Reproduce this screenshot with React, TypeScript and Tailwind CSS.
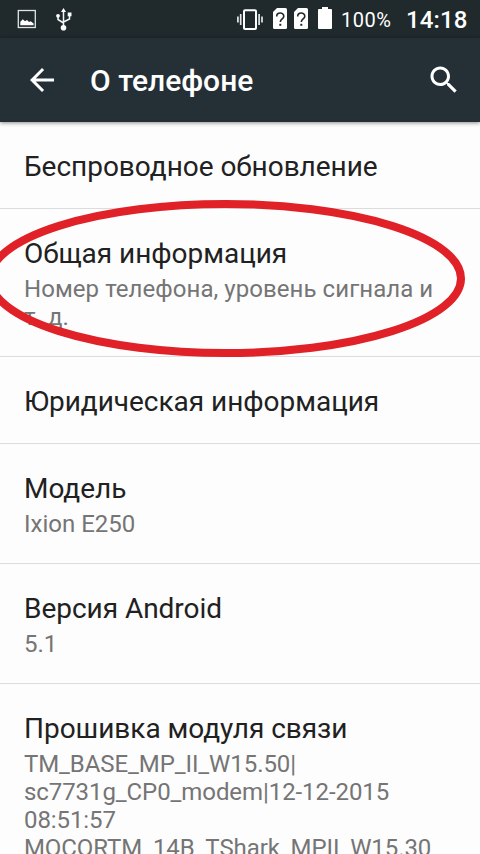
import React from 'react';

const items = [
    { title: 'Беспроводное обновление', lines: [], box: 'h-[87px]', tracking: '' },
    { title: 'Общая информация', lines: ['Номер телефона, уровень сигнала и', 'т. д.'], box: 'h-[148px]', tracking: 'tracking-[0.06px]' },
    { title: 'Юридическая информация', lines: [], box: 'h-[87px]', tracking: '' },
    { title: 'Модель', lines: ['Ixion E250'], box: 'h-[120px]', tracking: '' },
    { title: 'Версия Android', lines: ['5.1'], box: 'h-[120px]', tracking: '' },
    {
        title: 'Прошивка модуля связи',
        lines: ['TM_BASE_MP_II_W15.50|', 'sc7731g_CP0_modem|12-12-2015', '08:51:57', 'MOCORTM_14B_TShark_MPII_W15.30'],
        box: 'h-[190px]',
        tracking: 'tracking-[-0.08px]',
    },
];

const SimIcon = () => (
    <svg className="h-[21px] w-[14px]" viewBox="0 0 14 21" fill="none">
        <path d="M4 0H12.5Q14 0 14 1.5V19.5Q14 21 12.5 21H1.5Q0 21 0 19.5V4Z" fill="#fff" />
        <path d="M3.7 8.4C3.7 4 10.8 4 10.8 8.2C10.8 10.8 7.3 11 7.3 14" stroke="#20292c" strokeWidth="1.6" />
        <path d="M6.3 15.8h2v2h-2z" fill="#20292c" />
    </svg>
);

const StatusBar = () => (
    <div className="flex h-[38px] shrink-0 items-start bg-[#20292c] text-white">
        {/* Screenshot saved */}
        <svg className="mt-[9px] ml-[17px] h-5 w-5" viewBox="0 0 20 20" fill="none">
            <rect x="1.3" y="1.5" width="17" height="17" stroke="#dfe5e6" strokeWidth="1.3" />
            <path d="M3.3 16.3V12.8L5.8 10.2L8 12.2L10 11L12 13L13.7 12.3L16.6 14.5V16.3Z" fill="#fff" />
        </svg>
        {/* USB */}
        <svg className="mt-2 ml-[18px] h-[23px] w-[18px]" viewBox="0 0 18 23" fill="none">
            <path d="M8.5 3V19M3 8.5V11.5L8.5 15M14.5 7.5V11L8.5 14" stroke="#f2f5f5" strokeWidth="1.5" />
            <path d="M8.5 0L11 4H6Z" fill="#fff" />
            <circle cx="8.5" cy="19.8" r="2.8" fill="#fff" />
            <circle cx="3" cy="7.8" r="1.9" fill="#fff" />
            <path d="M12.7 4.5h3.8v3.8h-3.8z" fill="#fff" />
        </svg>
        {/* Vibrate mode */}
        <svg className="mt-[9px] ml-[163px] h-[21px] w-7" viewBox="0 0 28 21" fill="none">
            <rect x="8" y="1.3" width="12" height="18.6" rx="1" stroke="#fff" strokeWidth="2" />
            <path d="M4.7 5V16M1.9 7.5V13.5M23.1 5V16M26 7.5V13.5" stroke="#e3e7e8" strokeWidth="1.7" />
        </svg>
        <div className="mt-2 ml-[9px] flex gap-[7px]">
            <SimIcon />
            <SimIcon />
        </div>
        {/* Battery */}
        <svg className="mt-[7px] ml-[10px] h-[22px] w-[14px]" viewBox="0 0 14 22" fill="#fff">
            <path d="M4 0H10V2H13Q14 2 14 3V21Q14 22 13 22H1Q0 22 0 21V3Q0 2 1 2H4Z" />
        </svg>
        <span className="mt-2 ml-[9px] w-[58px] text-[20px] leading-6 tracking-[0.5px]">100%</span>
        <span className="mt-[6px] ml-[7px] text-[24px] leading-7 font-medium tracking-[0.1px] whitespace-nowrap">14:18</span>
    </div>
);

const AppBar = () => (
    <div className="flex h-[84px] shrink-0 items-center bg-[#243036] text-white shadow-[0_1px_4px_rgba(0,0,0,0.45)]">
        <svg className="ml-6 h-9 w-9" viewBox="0 0 24 24" fill="#fff">
            <path d="M20 11H7.83l5.59-5.59L12 4l-8 8 8 8 1.41-1.41L7.83 13H20v-2z" />
        </svg>
        <h1 className="ml-[30px] flex-1 pt-[2px] text-[30px] leading-9 font-medium">О телефоне</h1>
        <svg className="mr-[18px] h-9 w-9" viewBox="0 0 24 24" fill="#fff">
            <path d="M15.5 14h-.79l-.28-.27C15.41 12.59 16 11.11 16 9.5 16 5.91 13.09 3 9.5 3S3 5.91 3 9.5 5.91 16 9.5 16c1.61 0 3.09-.59 4.23-1.57l.27.28v.79l5 4.99L20.49 19l-4.99-5zm-6 0C7.01 14 5 11.99 5 9.5S7.01 5 9.5 5 14 7.01 14 9.5 11.99 14 9.5 14z" />
        </svg>
    </div>
);

const App = () => {
    return (
        <div className="relative flex h-[854px] w-[480px] flex-col overflow-hidden bg-[#fdfdfd] font-['Roboto',sans-serif]">
            <StatusBar />
            <AppBar />
            {/* Settings list */}
            {items.map((item) => (
                <div key={item.title} className={`shrink-0 border-b border-[#dcdcdc] pt-[29px] pl-6 ${item.box}`}>
                    <div className="mb-[5px] text-[28px] leading-8 tracking-[-0.03px] whitespace-nowrap text-[#212121]">{item.title}</div>
                    {item.lines.map((line) => (
                        <div key={line} className={`text-[24px] leading-7 whitespace-nowrap text-[#757575] ${item.tracking}`}>
                            {line}
                        </div>
                    ))}
                </div>
            ))}
            {/* Red marker around the general info item */}
            <svg className="pointer-events-none absolute top-0 left-0 h-[854px] w-[480px]" viewBox="0 0 480 854" fill="none">
                <ellipse cx="225.5" cy="278.5" rx="235.5" ry="74.5" stroke="#e02127" strokeWidth="8" />
            </svg>
        </div>
    );
};

export default App;
